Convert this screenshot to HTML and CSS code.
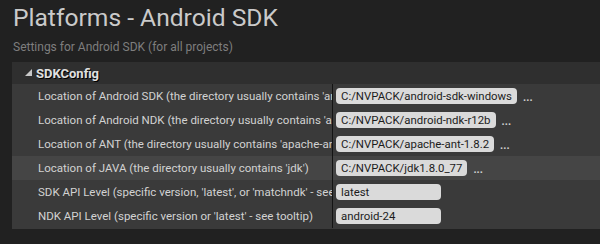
FILE: index.html
```html
<!DOCTYPE html>
<html>
<head>
<meta charset="utf-8">
<link rel="stylesheet" href="styles.css">
</head>
<body>
<div class="page">
  <h1 class="title">Platforms - Android SDK</h1>
  <div class="subtitle">Settings for Android SDK (for all projects)</div>
  <div class="panel">
    <div class="cat">
      <span class="arrow"></span>
      <span class="cat-name">SDKConfig</span>
    </div>
    <div class="row">
      <div class="label">Location of Android SDK (the directory usually contains 'android-sdk-')</div>
      <div class="value"><span class="box">C:/NVPACK/android-sdk-windows</span><span class="dots">...</span></div>
    </div>
    <div class="row">
      <div class="label">Location of Android NDK (the directory usually contains 'android-ndk-')</div>
      <div class="value"><span class="box">C:/NVPACK/android-ndk-r12b</span><span class="dots">...</span></div>
    </div>
    <div class="row">
      <div class="label">Location of ANT (the directory usually contains 'apache-ant-')</div>
      <div class="value"><span class="box">C:/NVPACK/apache-ant-1.8.2</span><span class="dots">...</span></div>
    </div>
    <div class="row hover">
      <div class="label">Location of JAVA (the directory usually contains 'jdk')</div>
      <div class="value"><span class="box">C:/NVPACK/jdk1.8.0_77</span><span class="dots">...</span></div>
    </div>
    <div class="row">
      <div class="label">SDK API Level (specific version, 'latest', or 'matchndk' - see tooltip)</div>
      <div class="value"><span class="box fixed">latest</span></div>
    </div>
    <div class="row">
      <div class="label">NDK API Level (specific version or 'latest' - see tooltip)</div>
      <div class="value"><span class="box fixed">android-24</span></div>
    </div>
  </div>
</div>
</body>
</html>
```

FILE: styles.css
```css
html, body {
  margin: 0;
  padding: 0;
  background: #212121;
}
body {
  font-family: Roboto, "Liberation Sans", sans-serif;
  width: 600px;
  height: 244px;
  overflow: hidden;
}
.page {
  padding: 0 0 0 12px;
}
.title {
  margin: 0;
  padding: 3px 0 0 1px;
  font-size: 24.6px;
  font-weight: 400;
  line-height: 30px;
  color: #cacaca;
}
.subtitle {
  padding: 6px 0 0 1px;
  font-size: 12px;
  line-height: 16px;
  color: #7e7e7e;
  height: 16px;
}
.panel {
  margin-top: 7px;
  background: #3a3a3a;
  padding-bottom: 1px;
}
.cat {
  height: 22px;
  background: #2f2f2f;
  display: flex;
  align-items: center;
  padding-left: 13px;
}
.arrow {
  width: 0;
  height: 0;
  border-left: 7px solid transparent;
  border-bottom: 7px solid #c8c8c8;
  margin-right: 4px;
  margin-top: -1px;
}
.cat-name {
  font-size: 13px;
  font-weight: 700;
  color: #e0e0e0;
  text-shadow: 1px 1px 0 #000;
}
.row {
  display: flex;
  height: 24px;
  align-items: center;
}
.row.hover {
  background: #454545;
}
.label {
  width: 294px;
  flex: none;
  padding-left: 26px;
  font-size: 11.5px;
  color: #d2d2d2;
  white-space: nowrap;
  overflow: hidden;
  height: 24px;
  line-height: 24px;
  border-right: 1px solid #141414;
}
.value {
  display: flex;
  align-items: center;
  padding-left: 3px;
}
.box {
  background: #dadada;
  color: #1c1c1c;
  font-size: 11.4px;
  height: 16px;
  line-height: 16px;
  padding: 0 5px;
  border-radius: 4px;
}
.box.fixed {
  width: 95px;
}
.dots {
  margin-left: 6px;
  font-size: 11px;
  font-weight: 700;
  color: #d0d0d0;
  letter-spacing: 0;
  line-height: 16px;
  padding-top: 3px;
}
```
